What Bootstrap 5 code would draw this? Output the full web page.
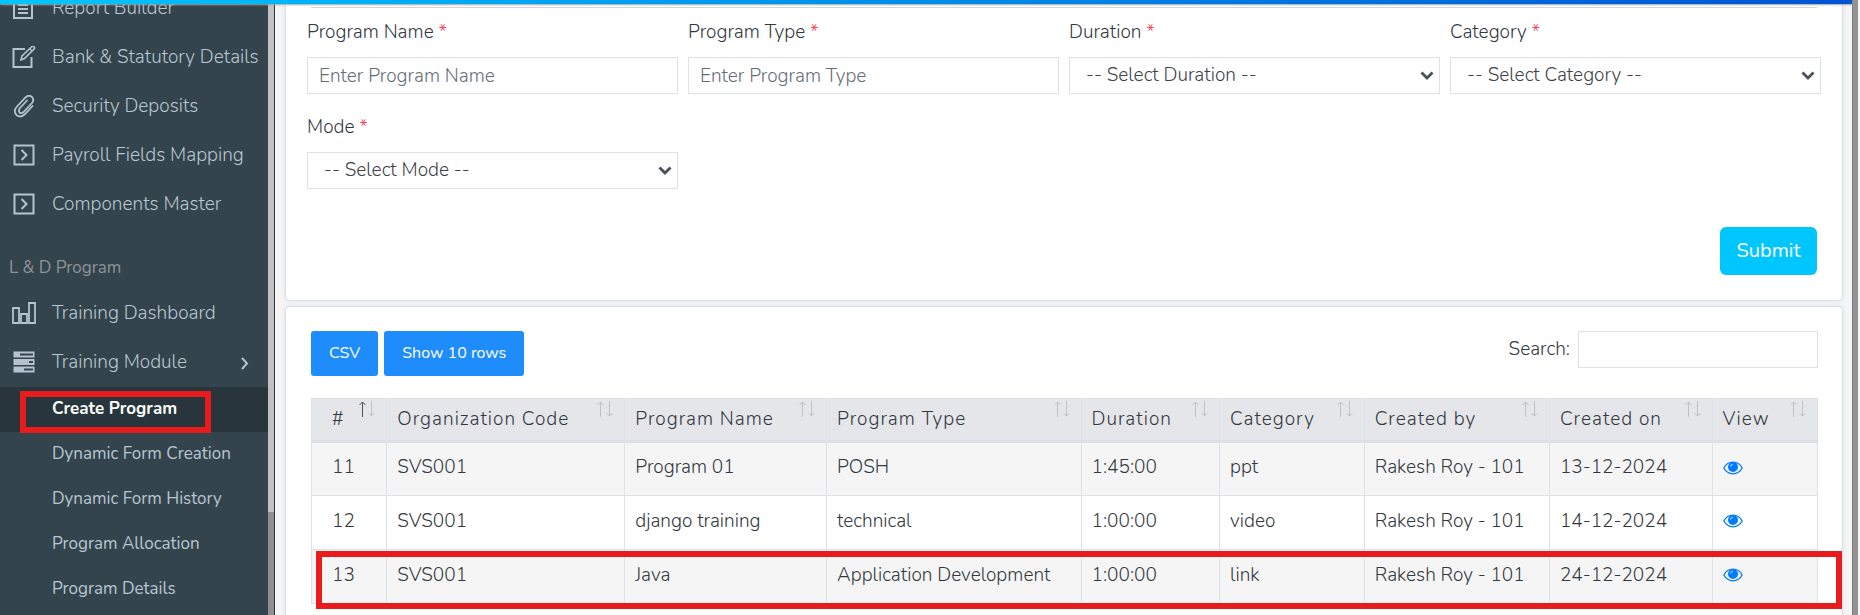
<!DOCTYPE html>
<html lang="en">
<head>
<meta charset="utf-8">
<meta name="viewport" content="width=device-width, initial-scale=1">
<title>Create Program</title>
<link href="https://cdn.jsdelivr.net/npm/bootstrap@5.3.0/dist/css/bootstrap.min.css" rel="stylesheet">
<style>
body { font-family: Nunito, Lato, "Noto Sans", sans-serif; font-size: 19px; font-weight: 300; color: #32383e; background: #f5f5f6; }
.shell { height: 100vh; overflow: hidden; }
.topline { height: 4px; background: linear-gradient(90deg, #00c6ff, #0052d4); box-shadow: 0 1px 2px #9aa; z-index: 3; }
.page-scroll { width: 6px; margin-right: 2px; background: #929292; border-left: 1px solid #7d7d7d; }
.shrinkable { min-width: 0; min-height: 0; }

.sidebar { width: 275px; background: #34444c; border-right: 1px solid #26343e; overflow: hidden; }
.side-scroll { width: 6px; background: #c1c1c1; }
.side-thumb { height: 103px; background: #8f8f8f; }
.side-menu { margin-top: -20px; font-size: 19px; white-space: nowrap; }
.side-menu a { color: #b8c7d3; text-decoration: none; }
.side-link { height: 49px; padding: 0 16px 0 12px; gap: 16px; }
.side-link svg { width: 24px; height: 24px; flex: none; }
.side-title { height: 60px; padding: 18px 0 0 9px; font-size: 17px; font-weight: 400; color: #8d9498; }
.sub-link { height: 45px; padding: 0 0 2px 52px; font-size: 17px; font-weight: 400; }
.side-menu .current { background: #29353d; color: #fff; font-weight: 700; }
.ring { position: absolute; border: 6px solid #e81c1c; pointer-events: none; }
.ring-menu { left: 20px; top: 4px; width: 191px; height: 42px; z-index: 2; }
.ring-row { left: 4px; right: -24px; top: 1px; height: 58px; }

.content { padding: 0 9px 0 10px; gap: 5px; }
.panel { background: #fff; border: 1px solid #d3e1ec; border-radius: 5px; box-shadow: 0 0 4px #dfe3e6; }
.panel-form { border-top: 0; border-radius: 0 0 5px 5px; padding: 3px 21px 25px; }
.panel-form hr { margin: 0 4px; border-top: 1px solid #d5d5d5; opacity: 1; }
.fields { display: grid; grid-template-columns: repeat(4, minmax(0, 1fr)); gap: 20px 10px; padding-top: 11px; }
.fields label { height: 38px; padding-top: 1px; line-height: 24px; }
.req { color: #ff4558; }
.box { height: 37px; border: 1px solid #dfe1e3; border-radius: 0; padding: 0 11px; font-size: 19px; font-weight: 300; color: #3c4349; background: #fff; }
.box::placeholder { color: #656e76; }
select.box { appearance: none; padding: 0 24px 0 16px; background: #fff url("data:image/svg+xml,%3Csvg xmlns='http://www.w3.org/2000/svg' viewBox='0 0 14 10'%3E%3Cpath d='M1.500 1.500 7 7l5.500-5.500' fill='none' stroke='%23495057' stroke-width='2.800'/%3E%3C/svg%3E") no-repeat right 5px center / 14px 10px; }
.actions { padding: 38px 4px 0 0; }
.btn-send { width: 97px; height: 48px; background: #00c6ff; color: #fff; border: 0; font-size: 20px; border-radius: 6px; }
.panel-list { padding: 24px 24px 40px 25px; }
.btn-tool { height: 45px; padding: 0 18px 2px; border: 0; border-radius: 3px; background: #1e8cfb; color: #fff; font-size: 16px; }
.search-box { width: 240px; }
.list-tools { margin-bottom: 22px; }

.grid-table { table-layout: fixed; border: 1px solid #dee2e6; color: #32383e; margin: 0; }
.grid-table th, .grid-table td { border: 1px solid #dee2e6; padding: 0 10px; box-shadow: none; white-space: nowrap; }
.grid-table th { position: relative; height: 43px; vertical-align: middle; background: #e4e6e9; font-weight: 300; letter-spacing: 1px; border-bottom: 3px solid #dcdfe4; }
.grid-table td { height: 54px; padding-bottom: 3px; vertical-align: middle; }
.grid-table tbody tr { position: relative; background: #fff; }
.grid-table tbody tr:nth-child(odd) { background: #f5f5f5; }
.grid-table th:first-child, .grid-table td:first-child { padding-left: 20px; }
.sorter { position: absolute; top: 1px; right: 10px; width: 18px; height: 18px; stroke: #bfc1c5; fill: none; }
.sorter .on { stroke: #4d5359; }
.eye { width: 20px; height: 14px; display: block; }
</style>
</head>
<body>
<svg width="0" height="0" class="position-absolute" aria-hidden="true">
  <symbol id="i-sort" viewBox="0 0 18 18"><path d="M4.500 17V2M1.500 5l3-3 3 3M13.500 1v15M10.500 13l3 3 3-3"/></symbol>
  <symbol id="i-next" viewBox="0 0 24 24"><path d="M2.500 1.500h19v19h-19zM9.500 6l5 5-5 5" fill="none" stroke="#b4c3cf" stroke-width="2"/></symbol>
  <symbol id="i-eye" viewBox="0 0 20 14"><path d="M.8 7Q4 1.200 10 1.200T19.200 7Q16 12.800 10 12.800T.8 7z" fill="none" stroke="#007bff" stroke-width="1.300"/><circle cx="10" cy="6" r="5" fill="#007bff"/><path d="M7.500 5.500Q7.800 3.500 9.800 3.200" fill="none" stroke="#fff" stroke-width=".8"/></symbol>
</svg>
<div class="shell d-flex">
  <div class="shrinkable d-flex flex-column flex-grow-1">
    <div class="topline position-relative flex-shrink-0"></div>
    <div class="shrinkable d-flex flex-grow-1">
      <aside class="sidebar d-flex flex-shrink-0">
        <nav class="side-menu shrinkable flex-grow-1">
          <a href="#" class="side-link d-flex align-items-center"><svg viewBox="0 0 24 24" fill="none" stroke="#b4c3cf" stroke-width="2"><path d="M2 1h18v20H2zM6 8h10M6 12h10M6 16h10"/></svg>Report Builder</a>
          <a href="#" class="side-link d-flex align-items-center"><svg viewBox="0 0 24 24" fill="none" stroke="#b4c3cf" stroke-width="2"><path d="M13 3H1.500v18h18V11"/><path d="M9 14l1-4 10-9.500q3-.5 2.500 2L12.500 12.500zM18 3l2 2" stroke-width="1.600"/></svg>Bank &amp; Statutory Details</a>
          <a href="#" class="side-link d-flex align-items-center"><svg viewBox="0 0 24 24" fill="none" stroke="#b4c3cf" stroke-width="1.800" stroke-linecap="round"><path d="M20.500 11l-7.500 8q-4 4-8 1.500-4.500-4 0-9l9-9.500q3-2.500 6 0 2.500 3 0 6l-8.500 9q-2 2-4 .5-1.500-2 .5-4.500l7-7.500"/></svg>Security Deposits</a>
          <a href="#" class="side-link d-flex align-items-center"><svg><use href="#i-next"/></svg>Payroll Fields Mapping</a>
          <a href="#" class="side-link d-flex align-items-center"><svg><use href="#i-next"/></svg>Components Master</a>
          <div class="side-title d-flex align-items-center">L &amp; D Program</div>
          <a href="#" class="side-link d-flex align-items-center"><svg viewBox="0 0 24 24" fill="none" stroke="#b4c3cf" stroke-width="1.800"><path d="M1 6h6v15H1zM9 12h6v9H9zM17 1h6v20h-6z"/></svg>Training Dashboard</a>
          <a href="#" class="side-link d-flex align-items-center"><svg viewBox="0 0 24 24" fill="#b4c3cf"><path fill-rule="evenodd" d="M1.500 .5h21v6h-21zM8 2.500h13v2H8zM1.500 8h21v6h-21zM17 10h4v2h-4zM1.500 15.500h21v6h-21zM12 17.500h9v2h-9z"/></svg><span class="flex-grow-1">Training Module</span><svg viewBox="0 0 24 24" fill="none" stroke="#b4c3cf" stroke-width="2"><path d="M14 7l5 5.500-5 5.500"/></svg></a>
          <div class="position-relative">
            <a href="#" class="sub-link current d-flex align-items-center">Create Program</a>
            <span class="ring ring-menu"></span>
          </div>
          <a href="#" class="sub-link d-flex align-items-center">Dynamic Form Creation</a>
          <a href="#" class="sub-link d-flex align-items-center">Dynamic Form History</a>
          <a href="#" class="sub-link d-flex align-items-center">Program Allocation</a>
          <a href="#" class="sub-link d-flex align-items-center">Program Details</a>
        </nav>
        <div class="side-scroll d-flex align-items-end flex-shrink-0"><div class="side-thumb w-100"></div></div>
      </aside>
      <main class="content shrinkable flex-grow-1 d-flex flex-column">
        <section class="panel panel-form">
          <hr>
          <form>
            <div class="fields">
              <div><label class="d-block" for="pname">Program Name <span class="req">*</span></label><input id="pname" class="box w-100 d-block" placeholder="Enter Program Name"></div>
              <div><label class="d-block" for="ptype">Program Type <span class="req">*</span></label><input id="ptype" class="box w-100 d-block" placeholder="Enter Program Type"></div>
              <div><label class="d-block" for="dur">Duration <span class="req">*</span></label><select id="dur" class="box w-100 d-block"><option>-- Select Duration --</option></select></div>
              <div><label class="d-block" for="cat">Category <span class="req">*</span></label><select id="cat" class="box w-100 d-block"><option>-- Select Category --</option></select></div>
              <div><label class="d-block" for="mode">Mode <span class="req">*</span></label><select id="mode" class="box w-100 d-block"><option>-- Select Mode --</option></select></div>
            </div>
            <div class="actions d-flex justify-content-end"><button type="button" class="btn btn-send">Submit</button></div>
          </form>
        </section>
        <section class="panel panel-list">
          <div class="list-tools d-flex justify-content-between align-items-start">
            <div class="d-flex" style="gap:6px"><button type="button" class="btn btn-tool">CSV</button><button type="button" class="btn btn-tool">Show 10 rows</button></div>
            <label class="d-flex align-items-center gap-2" for="find">Search: <input id="find" type="search" class="box search-box"></label>
          </div>
          <table class="table grid-table w-100">
            <colgroup><col style="width:5%"><col style="width:15.8%"><col style="width:13.4%"><col style="width:16.9%"><col style="width:9.2%"><col style="width:9.600%"><col style="width:12.3%"><col style="width:10.8%"><col style="width:7%"></colgroup>
            <thead><tr>
              <th># <svg class="sorter" viewBox="0 0 18 18"><path class="on" d="M4.500 17V2M1.500 5l3-3 3 3"/><path d="M13.500 1v15M10.500 13l3 3 3-3"/></svg></th>
              <th>Organization Code<svg class="sorter"><use href="#i-sort"/></svg></th>
              <th>Program Name<svg class="sorter"><use href="#i-sort"/></svg></th>
              <th>Program Type<svg class="sorter"><use href="#i-sort"/></svg></th>
              <th>Duration<svg class="sorter"><use href="#i-sort"/></svg></th>
              <th>Category<svg class="sorter"><use href="#i-sort"/></svg></th>
              <th>Created by<svg class="sorter"><use href="#i-sort"/></svg></th>
              <th>Created on<svg class="sorter"><use href="#i-sort"/></svg></th>
              <th>View<svg class="sorter"><use href="#i-sort"/></svg></th>
            </tr></thead>
            <tbody>
              <tr><td>11</td><td>SVS001</td><td>Program 01</td><td>POSH</td><td>1:45:00</td><td>ppt</td><td>Rakesh Roy - 101</td><td>13-12-2024</td><td><a href="#" aria-label="View"><svg class="eye"><use href="#i-eye"/></svg></a></td></tr>
              <tr><td>12</td><td>SVS001</td><td>django training</td><td>technical</td><td>1:00:00</td><td>video</td><td>Rakesh Roy - 101</td><td>14-12-2024</td><td><a href="#" aria-label="View"><svg class="eye"><use href="#i-eye"/></svg></a></td></tr>
              <tr><td>13</td><td>SVS001</td><td>Java</td><td>Application Development</td><td>1:00:00</td><td>link</td><td>Rakesh Roy - 101</td><td>24-12-2024</td><td><a href="#" aria-label="View"><svg class="eye"><use href="#i-eye"/></svg></a><span class="ring ring-row"></span></td></tr>
            </tbody>
          </table>
        </section>
      </main>
    </div>
  </div>
  <div class="page-scroll flex-shrink-0"></div>
</div>
<script src="https://cdn.jsdelivr.net/npm/bootstrap@5.3.0/dist/js/bootstrap.bundle.min.js"></script>
</body>
</html>
